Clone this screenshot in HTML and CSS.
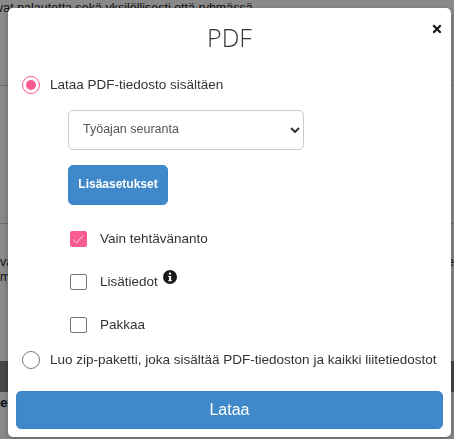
FILE: index.html
```html
<!DOCTYPE html>
<html lang="fi">
<head>
<meta charset="utf-8">
<title>PDF</title>
<link rel="stylesheet" href="styles.css">
</head>
<body>
<main class="page">
  <p class="page-top">vat palautetta sekä yksilöllisesti että ryhmässä</p>
  <hr class="page-rule first">
  <hr class="page-rule second">
  <p class="page-text">va<span>e</span></p>
  <p class="page-text">m</p>
  <div class="page-bar"></div>
  <p class="page-foot">ei</p>
</main>
<div class="backdrop"></div>
<section class="modal">
  <button class="close" type="button" aria-label="Sulje">
    <svg viewBox="0 0 10 10" width="10" height="10"><path d="M1.3 1.3 8.7 8.7M8.7 1.3 1.3 8.7"/></svg>
  </button>
  <h1 class="title">PDF</h1>
  <label class="radio-row first-radio">
    <span class="radio checked"></span>
    <span>Lataa PDF-tiedosto sisältäen</span>
  </label>
  <div class="options">
    <div class="select">
      <span>Työajan seuranta</span>
      <svg viewBox="0 0 10 6" width="10" height="6"><path d="M1 1 5 5 9 1"/></svg>
    </div>
    <button class="settings" type="button">Lisäasetukset</button>
    <label class="check-row">
      <span class="check checked"><svg viewBox="0 0 16 16" width="16" height="16"><path d="M3 8.5 6.5 12 13 4.5"/></svg></span>
      <span>Vain tehtävänanto</span>
    </label>
    <label class="check-row">
      <span class="check"></span>
      <span>Lisätiedot</span>
      <svg class="info" viewBox="0 0 14 14" width="14" height="14"><circle cx="7" cy="7" r="7"/><rect x="5.9" y="2.6" width="2.2" height="2.2" rx="1"/><path d="M5.2 6h2.9v4.2h.9v1.1H5.2v-1.1h.9V7.1h-.9z"/></svg>
    </label>
    <label class="check-row">
      <span class="check"></span>
      <span>Pakkaa</span>
    </label>
  </div>
  <label class="radio-row">
    <span class="radio"></span>
    <span>Luo zip-paketti, joka sisältää PDF-tiedoston ja kaikki liitetiedostot</span>
  </label>
  <button class="download" type="button">Lataa</button>
</section>
</body>
</html>
```
FILE: styles.css
```css
* { box-sizing: border-box; }
html, body { margin: 0; height: 100%; overflow: hidden; }
body { font-family: "Liberation Sans", Arial, sans-serif; font-size: 13.5px; color: #222; background: #fff; }
.page { height: 439px; overflow: hidden; display: flex; flex-direction: column; }
.page-top { margin: 0; height: 17px; line-height: 17px; font-size: 12.5px; white-space: nowrap; text-indent: -3px; flex: none; }
.page-rule { margin: 0; border: 0; border-top: 1px solid #ccc; }
.page-rule.first { margin-top: 68px; }
.page-rule.second { margin-top: 137px; }
.page-text { margin: 0; height: 14.5px; line-height: 14.5px; font-size: 12.5px; display: flex; justify-content: space-between; }
.page-rule.second + .page-text { margin-top: 31px; }
.page-bar { margin-top: 77px; height: 31px; background: #828282; flex: none; }
.page-foot { margin: 3px 0 0; font-weight: 700; line-height: 16px; color: #123; }
.backdrop { position: fixed; inset: 0; background: rgba(0, 0, 0, .46); }
.modal { position: fixed; left: 8px; top: 8px; width: 443px; height: 429px; background: #fff; border-radius: 5px; padding: 0 8px; box-shadow: 0 2px 6px rgba(0, 0, 0, .3); }
.close { position: absolute; top: 16px; right: 9px; width: 10px; height: 10px; padding: 0; border: 0; background: none; display: flex; }
.close path { fill: none; stroke: #111; stroke-width: 2.1; }
.title { margin: 14px 0 0; height: 31px; line-height: 31px; font-size: 25px; font-weight: 300; font-family: "Open Sans", "Liberation Sans", sans-serif; text-align: center; color: #333; }
.radio-row { display: flex; align-items: center; gap: 10px; height: 20px; margin-left: 6px; color: #333; white-space: nowrap; line-height: 20px; }
.first-radio { margin-top: 22px; }
.radio { width: 18px; height: 18px; flex: none; border-radius: 50%; border: 1px solid #777; background: #fff; }
.radio.checked { border-color: #fa5c92; padding: 3px; background: #fa5c92 content-box; }
.options { padding-left: 52px; display: flex; flex-direction: column; align-items: flex-start; }
.select { margin-top: 15px; width: 236px; height: 40px; border: 1px solid #ccc; border-radius: 5px; padding: 0 3px 2px 14px; display: flex; justify-content: space-between; align-items: center; color: #555; font-size: 12.5px; }
.select svg { fill: none; stroke: #333; stroke-width: 2; margin-top: 2px; }
.settings { margin-top: 15px; width: 100px; height: 40px; border: 1px solid #3d85c6; border-radius: 5px; background: #3f88ca; color: #fff; font: 700 12px "Liberation Sans", Arial, sans-serif; padding: 0 0 2px; }
.check-row { margin-top: 23px; height: 20px; display: flex; align-items: center; gap: 13px; margin-left: 2px; color: #333; position: relative; }
.settings + .check-row { margin-top: 24px; }
.check { width: 17px; height: 16px; flex: none; border: 1px solid #777; border-radius: 2px; background: #fff; display: flex; }
.check + span { margin-top: -2px; }
.check.checked { border-color: #fa5c92; background: #fa5c92; }
.check svg { fill: none; stroke: #ffd5e3; stroke-width: 1; margin: -1px; }
.info { position: absolute; left: 93px; top: -2px; }
.info circle { fill: #1a1a1a; }
.info rect, .info path { fill: #fff; }
.options + .radio-row { margin-top: 15px; }
.download { display: block; width: 427px; height: 38px; margin-top: 21px; border: 1px solid #3d85c6; border-radius: 5px; background: #3f88ca; color: #fff; font: 400 16px "Liberation Sans", Arial, sans-serif; padding: 0; }
```
